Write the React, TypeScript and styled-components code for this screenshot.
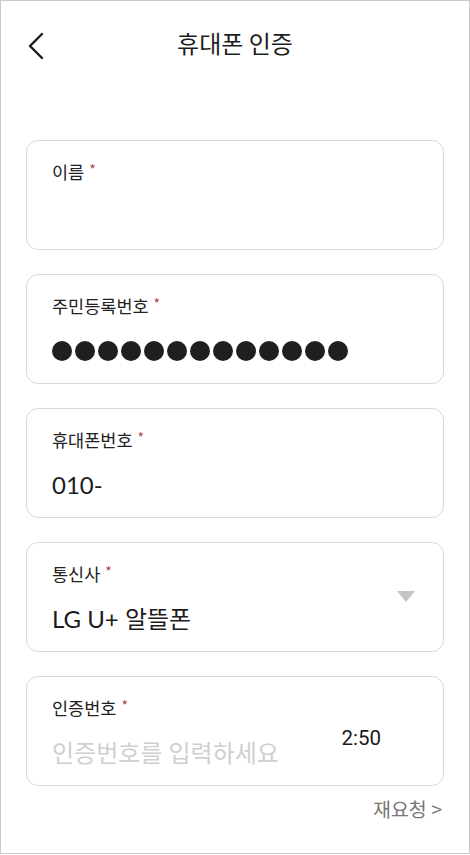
import styled, { createGlobalStyle } from "styled-components";

const GlobalStyle = createGlobalStyle`
  html, body {
    margin: 0;
    padding: 0;
    background: #ffffff;
  }
  body {
    font-family: "Lato", "Noto Sans CJK KR", sans-serif;
    color: #222222;
  }
`;

const SFrame = styled.div`
  box-sizing: border-box;
  width: 470px;
  height: 854px;
  border: 1px solid #c9c9c9;
  background: #ffffff;
  display: flex;
  flex-direction: column;
`;

const SHeader = styled.header`
  position: relative;
  height: 89px;
  padding-bottom: 6px;
  box-sizing: border-box;
  display: flex;
  align-items: center;
  justify-content: center;
`;

const SBackButton = styled.button`
  position: absolute;
  left: 22px;
  top: 28px;
  width: 26px;
  height: 34px;
  padding: 0;
  border: none;
  background: none;
  display: flex;
  align-items: center;
  justify-content: center;
`;

const STitle = styled.h1`
  margin: 0;
  font-family: "Noto Sans CJK KR", sans-serif;
  font-size: 24px;
  font-weight: 400;
  color: #1e1e1e;
`;

const SForm = styled.main`
  padding: 50px 24px 0 25px;
  display: flex;
  flex-direction: column;
  gap: 24px;
`;

const SCard = styled.div`
  box-sizing: border-box;
  width: 418px;
  height: 110px;
  border: 1px solid #d9d9d9;
  border-radius: 12px;
  padding: 14px 28px 16px 25px;
  display: flex;
  align-items: flex-start;
`;

const SFieldBody = styled.div`
  flex: 1;
  display: flex;
  flex-direction: column;
`;

const SLabel = styled.div`
  font-family: "Noto Sans CJK KR", sans-serif;
  font-size: 17.5px;
  line-height: 28px;
  color: #222222;
`;

const SStar = styled.span`
  margin-left: 5px;
  font-size: 14px;
  vertical-align: 4px;
  color: #b5443f;
`;

const SValue = styled.div<{ $placeholder?: boolean }>`
  margin-top: 12px;
  font-size: 24px;
  line-height: 38px;
  color: ${({ $placeholder }) => ($placeholder ? "#cfcfcf" : "#1c1c1c")};
`;

const SDots = styled.div`
  margin-top: 12px;
  height: 38px;
  display: flex;
  align-items: center;
  gap: 3px;
`;

const SDot = styled.span`
  width: 20px;
  height: 20px;
  border-radius: 50%;
  background: #1f1f1f;
`;

const SCaret = styled.span`
  align-self: center;
  width: 0;
  height: 0;
  border-left: 9px solid transparent;
  border-right: 9px solid transparent;
  border-top: 11px solid #c4c4c4;
`;

const STimer = styled.span`
  align-self: center;
  margin-top: 16px;
  margin-right: 34px;
  font-family: "Roboto", sans-serif;
  font-size: 20.5px;
  color: #1c1c1c;
`;

const SResend = styled.button`
  align-self: flex-end;
  margin-top: -16px;
  margin-right: 3px;
  padding: 0;
  border: none;
  background: none;
  font-family: "Noto Sans CJK KR", sans-serif;
  font-size: 19.5px;
  color: #777777;
`;

const fields = [
  { label: "이름" },
  { label: "주민등록번호", masked: 13 },
  { label: "휴대폰번호", value: "010-" },
];

function Label({ text }: { text: string }) {
  return (
    <SLabel>
      {text}
      <SStar>*</SStar>
    </SLabel>
  );
}

export default function App() {
  return (
    <>
      <GlobalStyle />
      <SFrame>
        <SHeader>
          <SBackButton aria-label="뒤로">
            <svg width="18" height="28" viewBox="0 0 18 28" fill="none">
              <path
                d="M15 2 L3 14 L15 26"
                stroke="#1a1a1a"
                strokeWidth="2.4"
                strokeLinecap="round"
                strokeLinejoin="round"
              />
            </svg>
          </SBackButton>
          <STitle>휴대폰 인증</STitle>
        </SHeader>

        <SForm>
          {fields.map(field => (
            <SCard key={field.label}>
              <SFieldBody>
                <Label text={field.label} />
                {field.masked ? (
                  <SDots>
                    {Array.from({ length: field.masked }).map((_, i) => (
                      <SDot key={i} />
                    ))}
                  </SDots>
                ) : (
                  <SValue>{field.value ?? ""}</SValue>
                )}
              </SFieldBody>
            </SCard>
          ))}

          <SCard>
            <SFieldBody>
              <Label text="통신사" />
              <SValue>LG U+ 알뜰폰</SValue>
            </SFieldBody>
            <SCaret />
          </SCard>

          <SCard>
            <SFieldBody>
              <Label text="인증번호" />
              <SValue $placeholder>인증번호를 입력하세요</SValue>
            </SFieldBody>
            <STimer>2:50</STimer>
          </SCard>

          <SResend>재요청 &gt;</SResend>
        </SForm>
      </SFrame>
    </>
  );
}
